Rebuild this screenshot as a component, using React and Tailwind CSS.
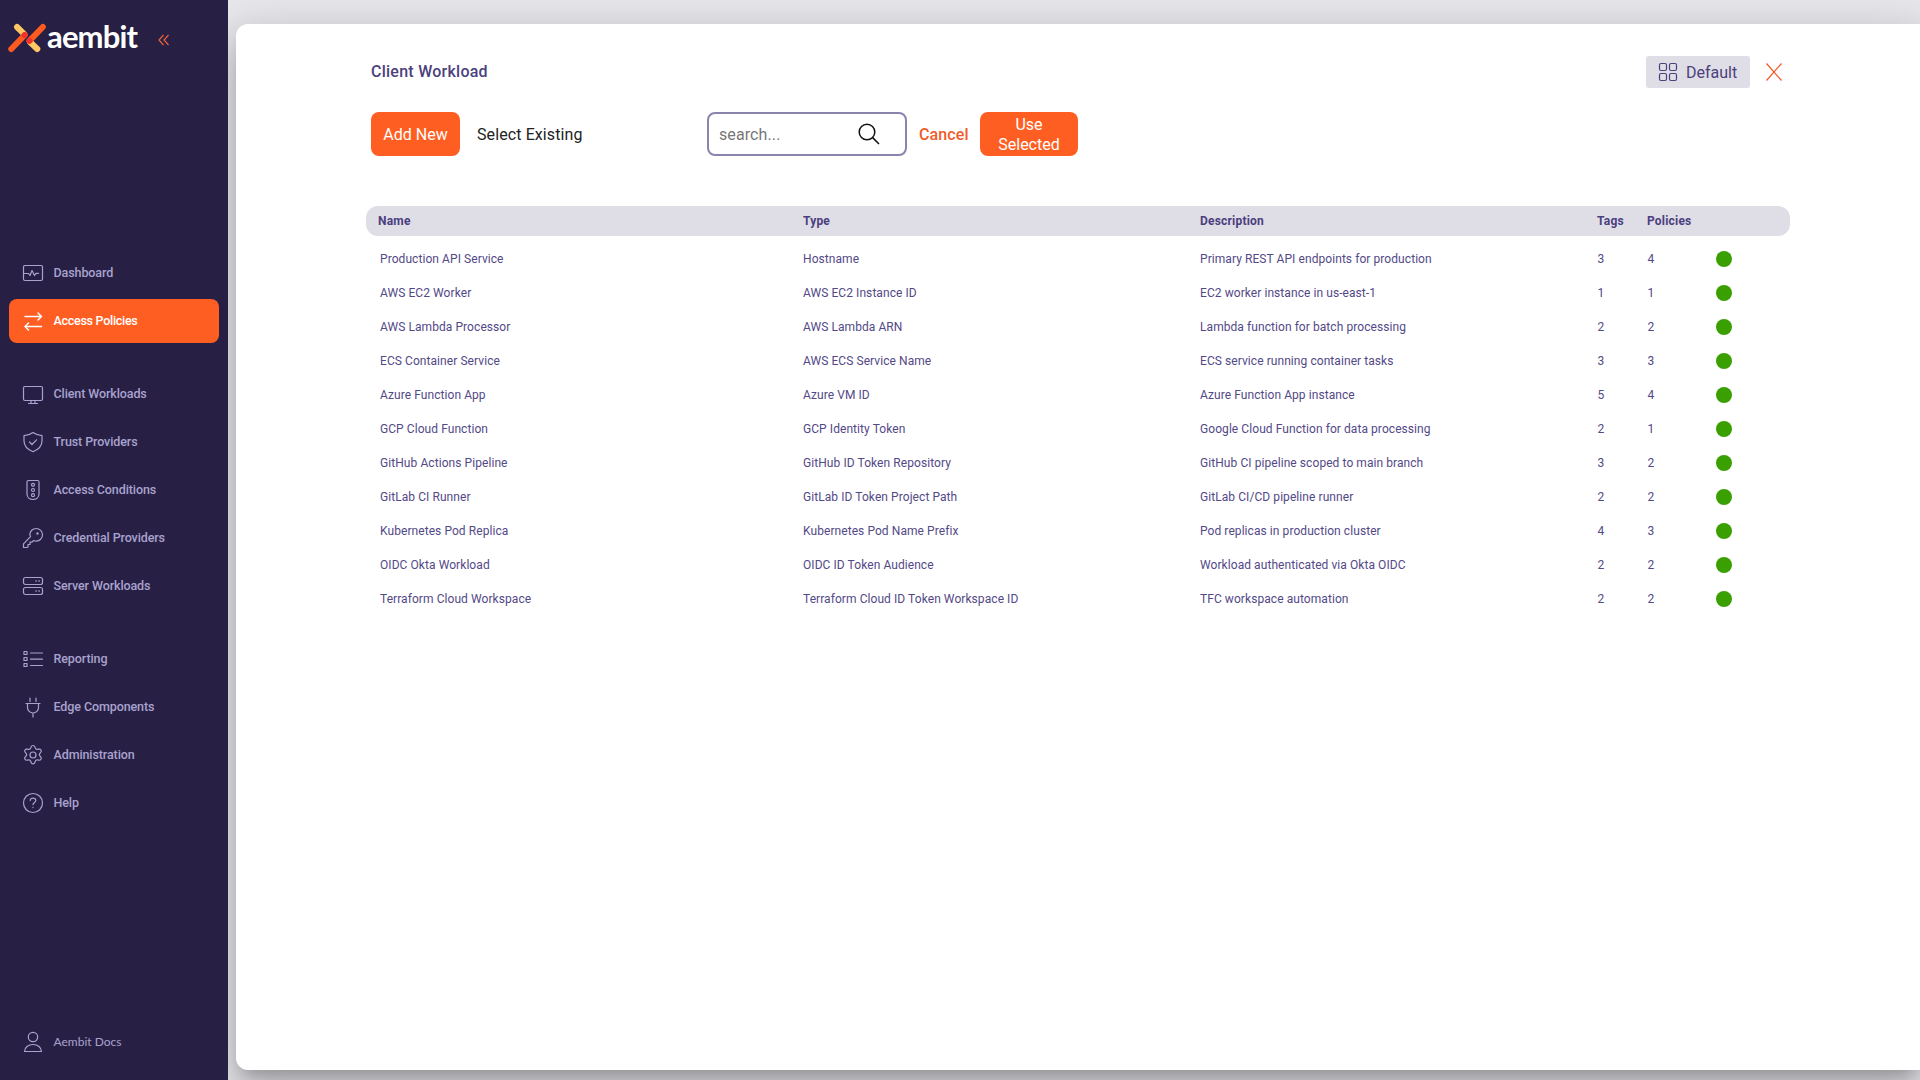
import React from "react";

const S = ({ children, w = 1.2, className = "" }) => (
  <svg width="24" height="24" viewBox="0 0 24 24" fill="none" stroke="currentColor" strokeWidth={w} strokeLinecap="round" strokeLinejoin="round" className={"shrink-0 " + className}>
    {children}
  </svg>
);

const icons = {
  dashboard: <S><rect x="2.5" y="4.5" width="19" height="15" rx="1.5" /><path d="M2.5 12.5h5l1.500 2 2-5 2.500 5 1.500-2.200H17.500" /></S>,
  policies: <S w={1.5}><path d="M4 7.5h16.5M17 4l3.5 3.5L17 11M20.5 17.5H4M7.500 14 4 17.500l3.500 3.500" /></S>,
  monitor: <S><rect x="2.500" y="4.500" width="19" height="14" rx="1.500" /><path d="M10 18.500v3M14 18.500v3M7.500 21.500h9" /></S>,
  shield: <S><path d="M12 2.500c2.800 2 5.800 3 9 3.200v5.100c0 5-3.500 8.800-9 10.900-5.500-2.100-9-5.900-9-10.900V5.700c3.200-.2 6.200-1.200 9-3.200Z" /><path d="m8.500 12 2.500 2.500 4.500-4.700" /></S>,
  conditions: <S><path d="M7.500 2.500h9c.9 0 1.500.6 1.500 1.500v12c0 3.200-2.600 5.500-6 5.500S6 19.200 6 16V4c0-.9.6-1.500 1.500-1.500Z" /><circle cx="12" cy="6.800" r="1.500" /><circle cx="12" cy="12" r="1.500" /><circle cx="12" cy="17.200" r="1.500" /></S>,
  key: <S><path d="M15.200 2.500a6.300 6.300 0 0 1 0 12.600c-1 0-1.800-.2-2.600-.6L11 16.200H9v2.300H7V21l-.9.500H2.500v-3.700l7-7.200c-.4-.7-.6-1.400-.6-2 0-3.500 2.800-6.100 6.300-6.100Z" /><circle cx="16.500" cy="7.500" r=".6" fill="currentColor" /></S>,
  server: <S><rect x="2.500" y="3.500" width="19" height="7" rx="2" /><rect x="2.500" y="13.500" width="19" height="7" rx="2" /><path d="M15 7h.2M18 7h.2M15 17h.2M18 17h.2" strokeWidth="1.600" /></S>,
  list: <S><rect x="3" y="4.500" width="3" height="3" /><rect x="3" y="10.500" width="3" height="3" /><rect x="3" y="16.500" width="3" height="3" /><path d="M9.500 6h12M9.500 12.200h12M9.500 18.500h12" /></S>,
  plug: <S><path d="M9 3v3.500M15 3v3.500M5 8.500h14M6.500 8.500v4c0 3 2.400 5.500 5.500 5.500s5.500-2.500 5.500-5.500v-4M12 18v4" /></S>,
  gear: <S><circle cx="12" cy="12" r="3" /><path d="M10.100 3.900c.6-1.900 3.200-1.900 3.800 0l.3.900c.4 1.100 1.500 1.800 2.700 1.500l.9-.2c1.900-.4 3.200 1.800 1.900 3.300l-.6.700c-.8.900-.8 2.200 0 3.100l.6.700c1.300 1.500 0 3.700-1.900 3.300l-.9-.2c-1.200-.300-2.300.400-2.700 1.500l-.3.900c-.6 1.900-3.200 1.900-3.800 0l-.3-.9c-.4-1.100-1.500-1.800-2.700-1.500l-.9.200c-1.900.4-3.200-1.800-1.900-3.300l.6-.7c.8-.9.8-2.200 0-3.100l-.6-.7C3 7.900 4.300 5.700 6.200 6.100l.9.200c1.200.3 2.300-.4 2.700-1.500Z" /></S>,
  help: <S><circle cx="12" cy="12" r="9.500" /><path d="M9.200 9.500c0-1.400 1.200-2.400 2.800-2.400s2.800 1 2.800 2.400c0 2-2.800 2-2.800 4.200M12 16.300v.3" /></S>,
  person: <S><circle cx="12" cy="7" r="4.700" /><path d="M3.500 21.500c.2-4 3.600-7 8.500-7s8.300 3 8.500 7Z" /></S>,
};

const groups = [
  [["dashboard", "Dashboard"], ["policies", "Access Policies", true]],
  [["monitor", "Client Workloads"], ["shield", "Trust Providers"], ["conditions", "Access Conditions"], ["key", "Credential Providers"], ["server", "Server Workloads"]],
  [["list", "Reporting"], ["plug", "Edge Components"], ["gear", "Administration"], ["help", "Help"]],
];

const rows = [
  ["Production API Service", "Hostname", "Primary REST API endpoints for production", 3, 4],
  ["AWS EC2 Worker", "AWS EC2 Instance ID", "EC2 worker instance in us-east-1", 1, 1],
  ["AWS Lambda Processor", "AWS Lambda ARN", "Lambda function for batch processing", 2, 2],
  ["ECS Container Service", "AWS ECS Service Name", "ECS service running container tasks", 3, 3],
  ["Azure Function App", "Azure VM ID", "Azure Function App instance", 5, 4],
  ["GCP Cloud Function", "GCP Identity Token", "Google Cloud Function for data processing", 2, 1],
  ["GitHub Actions Pipeline", "GitHub ID Token Repository", "GitHub CI pipeline scoped to main branch", 3, 2],
  ["GitLab CI Runner", "GitLab ID Token Project Path", "GitLab CI/CD pipeline runner", 2, 2],
  ["Kubernetes Pod Replica", "Kubernetes Pod Name Prefix", "Pod replicas in production cluster", 4, 3],
  ["OIDC Okta Workload", "OIDC ID Token Audience", "Workload authenticated via Okta OIDC", 2, 2],
  ["Terraform Cloud Workspace", "Terraform Cloud ID Token Workspace ID", "TFC workspace automation", 2, 2],
];

function Sidebar() {
  return (
    <nav className="flex h-full w-[228px] shrink-0 flex-col bg-[#272044] px-[9px] text-[#a9a2cf]">
      <div className="-ml-[2px] flex h-[76px] items-center">
        <svg width="40" height="30" viewBox="0 0 40 30" strokeWidth="6" strokeLinecap="round" className="shrink-0">
          <path d="M10 4 17 10.800M23 19 30.300 26" stroke="#ffc864" />
          <path d="M4.300 26 17.800 12M35.800 4 22.400 17.900" stroke="#ff5a1f" />
          <path d="M17.400 12.200 17.600 12M22.500 17.900 22.700 17.700" strokeWidth="5.500" stroke="#f0302f" />
        </svg>
        <span className="-mt-[3px] font-['Lato'] text-[31px] leading-none font-bold tracking-[-0.85px] text-white">aembit</span>
        <svg width="12" height="12" viewBox="0 0 12 12" fill="none" stroke="#e8623a" strokeWidth="1.200" className="mt-[4px] ml-[21px]">
          <path d="M5.500 1 1 6l4.500 5M10.500 1 6 6l4.500 5" />
        </svg>
      </div>
      <div className="mt-[175px] flex flex-col gap-[29px]">
        {groups.map((g, i) => (
          <div key={i} className="flex flex-col gap-1">
            {g.map(([icon, label, active]) => (
              <div key={label} className={"flex h-11 items-center gap-[8.5px] rounded-lg pl-3 " + (active ? "bg-[#ff5e22] text-white" : "")}>
                {icons[icon]}
                <span className={"text-[12.5px] leading-[14px] font-medium " + (active ? "tracking-[-0.28px]" : "tracking-[-0.1px]")}>{label}</span>
              </div>
            ))}
          </div>
        ))}
      </div>
      <div className="mt-auto mb-[16px] flex h-11 items-center gap-[8.5px] pl-3">
        {icons.person}
        <span className="font-['Lato'] text-xs leading-none">Aembit Docs</span>
      </div>
    </nav>
  );
}

const grid = "grid grid-cols-[425px_397px_397px_50px_72px_1fr] items-center";

export default function App() {
  return (
    <div className="flex h-[1080px] w-[1920px] overflow-hidden bg-[#e8e7ec] font-['Roboto',sans-serif]">
      <Sidebar />
      <div className="h-full min-w-0 flex-1 overflow-hidden pt-6 pl-2">
        <main className="h-[1046px] w-full rounded-l-xl bg-white pt-8 pl-[130px] text-[#4b417d] shadow-[0_11px_15px_-7px_rgba(0,0,0,0.2),0_24px_38px_3px_rgba(0,0,0,0.14),0_9px_46px_8px_rgba(0,0,0,0.12)]">
          <header className="flex h-8 w-[1418px] items-center pl-[5px]">
            <h1 className="text-base font-medium tracking-[0.25px]">Client Workload</h1>
            <button className="ml-auto flex h-8 w-[104px] items-center rounded-[3px] bg-[#dfdde6] pl-[12px] text-base">
              <svg width="20" height="20" viewBox="0 0 20 20" fill="none" stroke="currentColor" strokeWidth="1.200" className="mr-[8px] shrink-0">
                <rect x="1.500" y="1.500" width="7" height="7" rx="1.500" /><rect x="11.500" y="1.500" width="7" height="7" rx="1.500" />
                <rect x="1.500" y="11.500" width="7" height="7" rx="1.500" /><rect x="11.500" y="11.500" width="7" height="7" rx="1.500" />
              </svg>
              <span className="pt-px">Default</span>
            </button>
            <svg width="16" height="18" viewBox="0 0 16 18" stroke="#f15a29" strokeWidth="1.200" className="mr-[2px] ml-4"><path d="M.5.500l15 17M15.500.500l-15 17" /></svg>
          </header>
          <div className="mt-6 ml-[5px] flex h-11 items-center text-base">
            <button className="h-11 w-[89px] rounded-lg bg-[#ff5e22] pt-px text-white">Add New</button>
            <span className="ml-[17px] w-[230px] pt-px tracking-[0.1px] text-[#222]">Select Existing</span>
            <div className="flex h-11 w-[200px] items-center justify-between rounded-lg border-2 border-[#8a84ad] pr-[25px] pl-[10px] text-[#777]">
              <span className="pt-px tracking-[0.1px]">search...</span>
              <svg width="22" height="22" viewBox="0 0 22 22" fill="none" stroke="#111" strokeWidth="1.500"><circle cx="9" cy="9" r="7.800" /><path d="m14.600 14.600 6.400 6.400" /></svg>
            </div>
            <span className="w-[73px] pt-px pl-3 font-medium tracking-[0.1px] text-[#f15a29]">Cancel</span>
            <button className="h-11 w-[98px] rounded-lg bg-[#ff5e22] px-3 pt-px leading-5 text-white">Use Selected</button>
          </div>
          <div className="mt-[50px] w-[1424px]">
            <div className={grid + " h-[30px] rounded-[12px] bg-[#dfdde6] pl-3 text-xs font-bold tracking-[0.2px] text-[#4b3f80]"}>
              <span>Name</span><span>Type</span><span>Description</span><span>Tags</span><span>Policies</span>
            </div>
            <div className="pt-[6px]">
              {rows.map((r) => (
                <div key={r[0]} className={grid + " h-[34px] pl-3 text-xs tracking-[0.07px] text-[#534987]"}>
                  <span className="pl-[2px]">{r[0]}</span><span>{r[1]}</span><span>{r[2]}</span><span className="pl-[0.5px]">{r[3]}</span><span className="pl-[0.5px]">{r[4]}</span>
                  <span className="-ml-[3px] size-4 rounded-full bg-[#3a9f00]" />
                </div>
              ))}
            </div>
          </div>
        </main>
      </div>
    </div>
  );
}
